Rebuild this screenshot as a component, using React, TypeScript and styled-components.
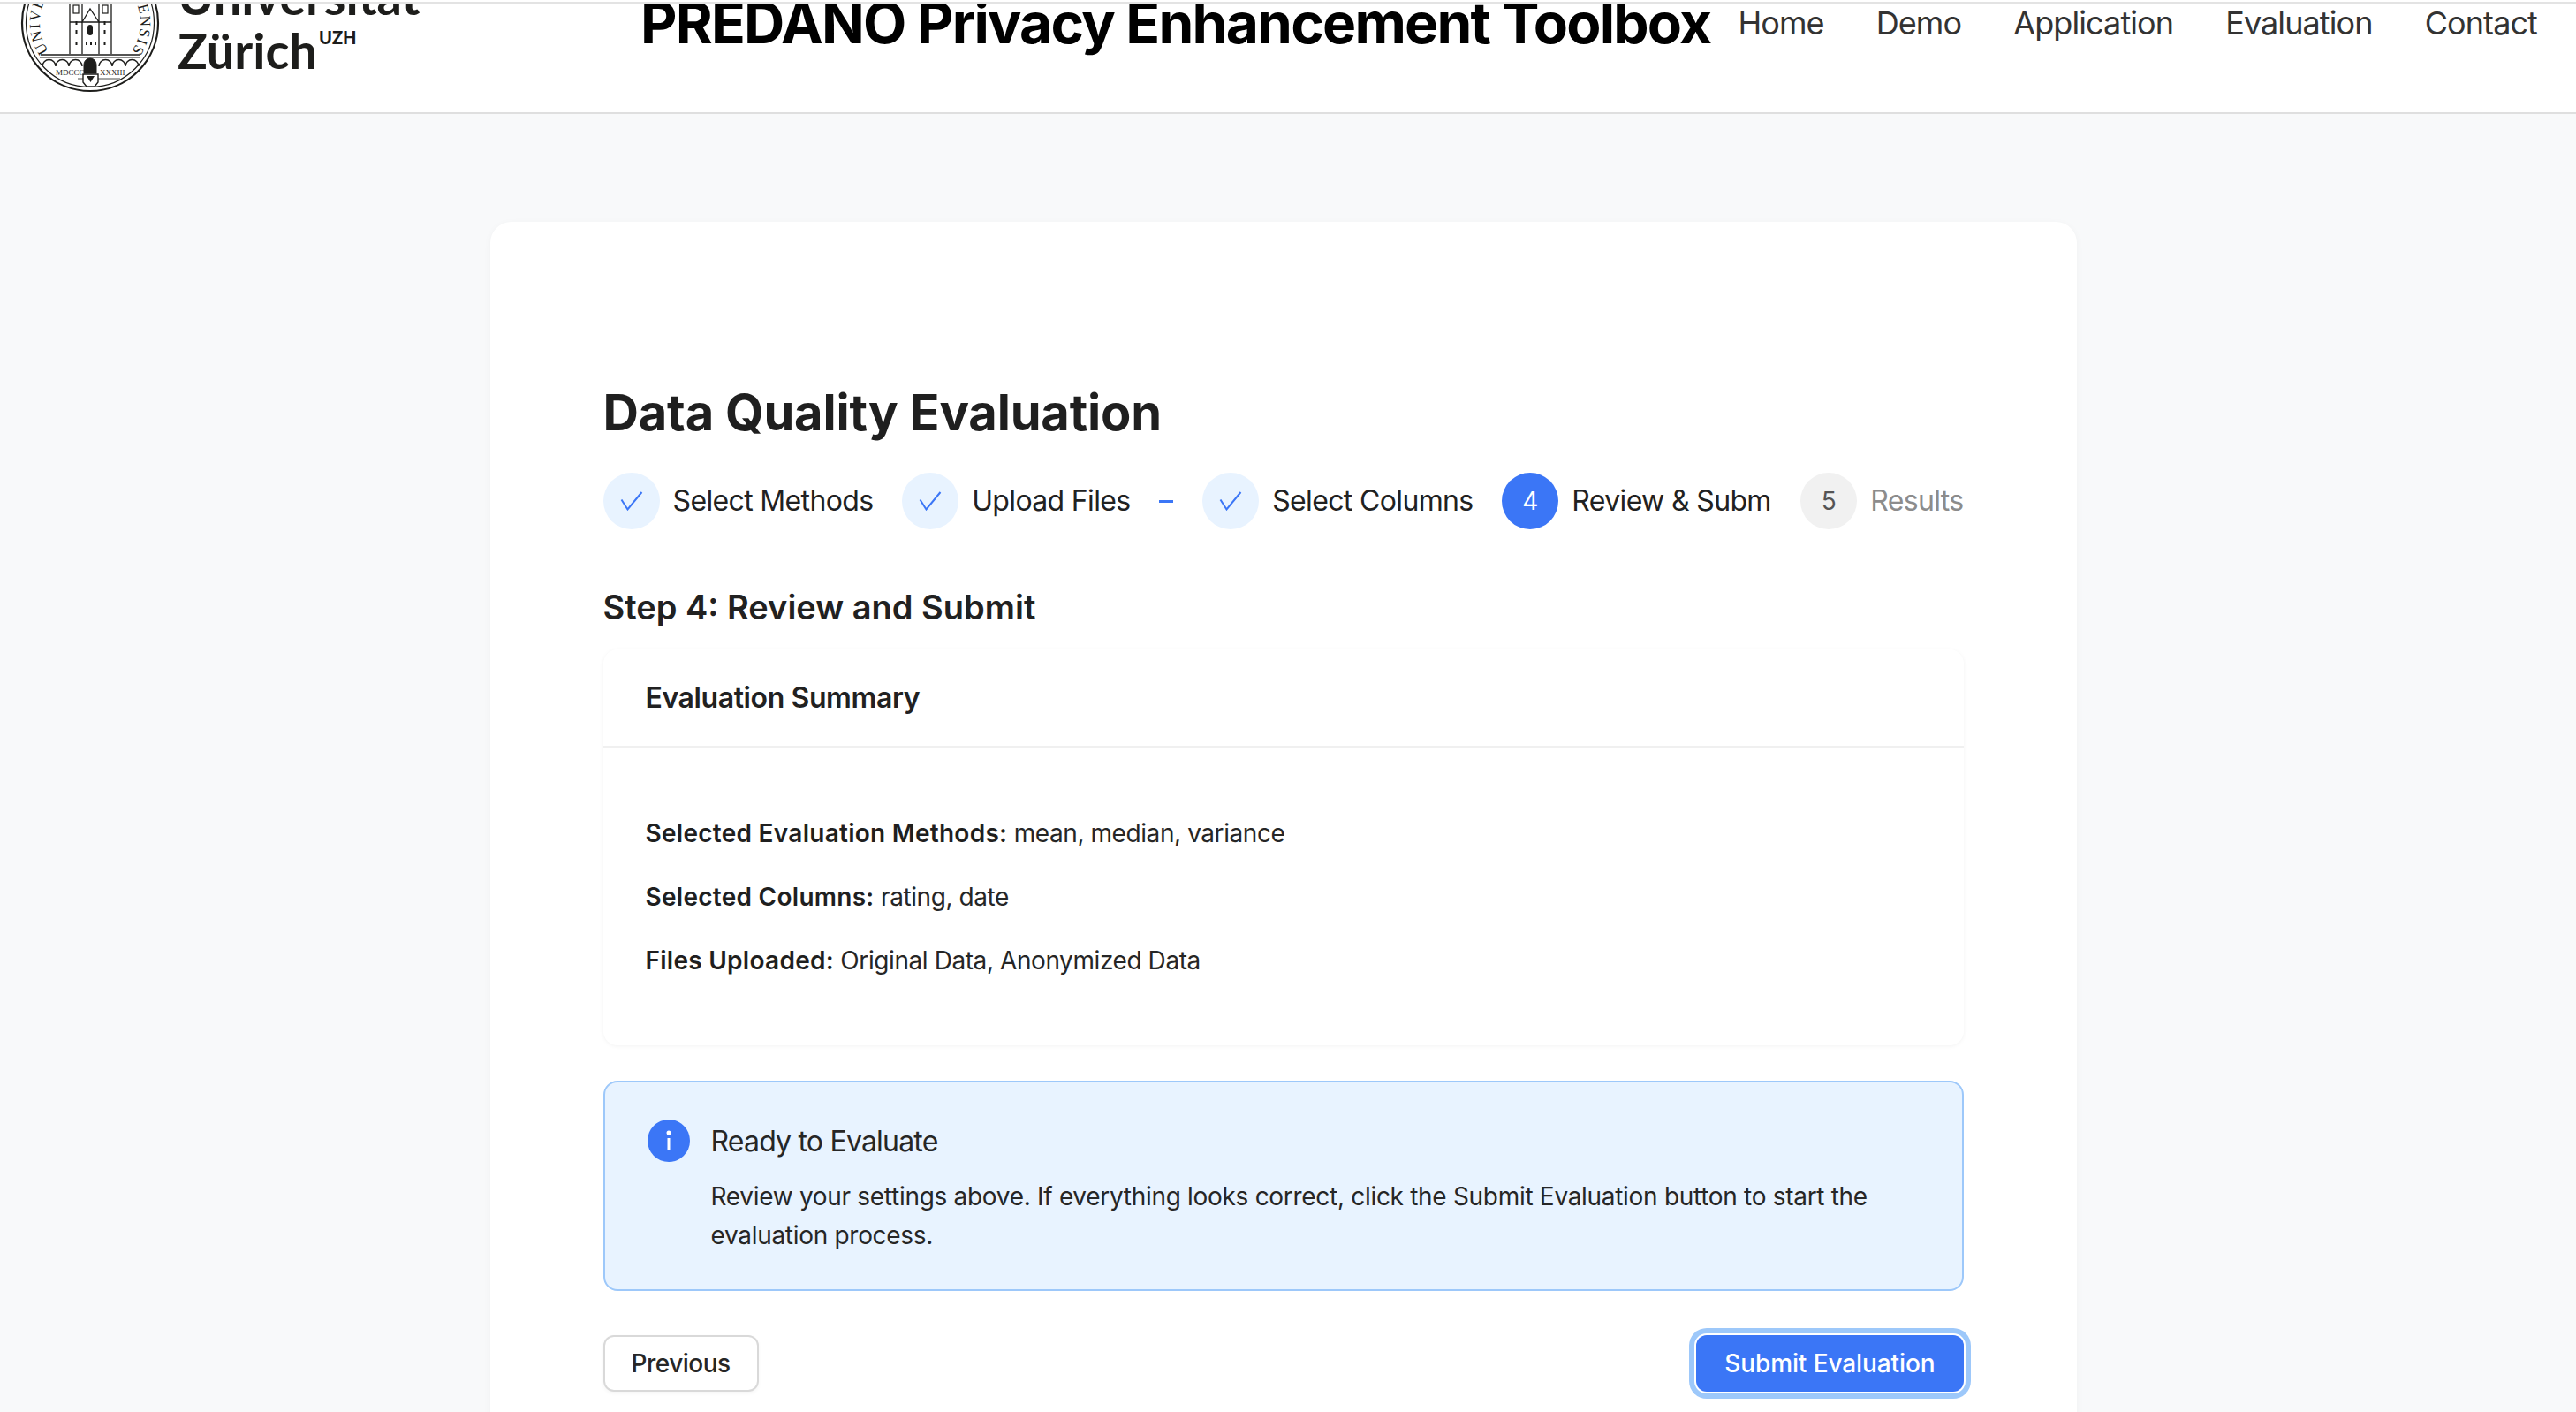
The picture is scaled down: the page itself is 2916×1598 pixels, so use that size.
import React from "react";
import styled, { createGlobalStyle } from "styled-components";

const GlobalStyle = createGlobalStyle`
  html, body {
    margin: 0;
    height: 100%;
    overflow: hidden;
    background: #f8f9fa;
  }
  body {
    font-family: Inter, "Liberation Sans", sans-serif;
    color: #212121;
  }
  * {
    box-sizing: border-box;
  }
`;

const HeaderShell = styled.div`
  padding-top: 2px;
  background: #fff;
`;

const Header = styled.header`
  height: 127px;
  overflow: hidden;
  background: #fff;
  border-top: 2px solid #e3e3e3;
  border-bottom: 2px solid #dfdfdf;
`;

const HeaderRow = styled.div`
  height: 200px;
  margin-top: -78px;
  padding: 0 44px 0 17px;
  display: flex;
  align-items: center;
`;

const Logo = styled.div`
  display: flex;
  align-items: center;
  gap: 14px;
`;

const LogoText = styled.div`
  font-family: Lato, "Liberation Sans", sans-serif;
  font-size: 56px;
  font-weight: 700;
  line-height: 61px;
  color: #1d1d1b;
  white-space: nowrap;
`;

const LogoMark = styled.span`
  font-size: 20px;
  font-weight: 900;
  line-height: 0;
  vertical-align: 28px;
  margin-left: 2px;
`;

const SiteTitle = styled.h1`
  margin: 0 0 0 auto;
  font-size: 64px;
  font-weight: 700;
  line-height: 1;
  letter-spacing: -1.75px;
  color: #000;
  white-space: nowrap;
`;

const Nav = styled.nav`
  margin-left: 31px;
  display: flex;
  gap: 59px;
`;

const NavLink = styled.a`
  font-size: 36px;
  letter-spacing: -0.9px;
  color: #333;
  white-space: nowrap;
  text-decoration: none;
`;

const Main = styled.main`
  padding: 122px 11px 0 0;
`;

const Panel = styled.section`
  width: 1796px;
  margin: 0 auto;
  padding: 182px 128px 128px;
  background: #fff;
  border-radius: 24px;
  box-shadow: 0 2px 8px rgba(0, 0, 0, 0.04);
`;

const PanelTitle = styled.h2`
  margin: 0;
  font-size: 56px;
  font-weight: 700;
  line-height: 68px;
  letter-spacing: -0.18px;
  color: #1f1f1f;
`;

const Steps = styled.div`
  margin-top: 34px;
  display: flex;
  align-items: center;
  justify-content: space-between;
`;

const Step = styled.div`
  display: flex;
  align-items: center;
  gap: 15px;
`;

const StepCircle = styled.div<{ $state: "done" | "active" | "todo" }>`
  width: 64px;
  height: 64px;
  flex: none;
  display: flex;
  align-items: center;
  justify-content: center;
  border-radius: 50%;
  font-size: 28px;
  background: ${(p) =>
    p.$state === "done" ? "#e8f3ff" : p.$state === "active" ? "#3b76f6" : "#f1f1f1"};
  color: ${(p) => (p.$state === "active" ? "#fff" : "#555")};
`;

const StepLabel = styled.div<{ $muted?: boolean; $clip?: boolean }>`
  font-size: 32px;
  line-height: 44px;
  letter-spacing: -0.65px;
  white-space: nowrap;
  color: ${(p) => (p.$muted ? "#8c8c8c" : "#212121")};
  ${(p) => p.$clip && "width: 226px; overflow: hidden;"}
`;

const StepDash = styled.div`
  flex: none;
  width: 16px;
  height: 3px;
  background: #3b76f6;
`;

const StepTitle = styled.h3`
  margin: 60px 0 0;
  font-size: 38px;
  font-weight: 600;
  line-height: 56px;
  color: #212121;
`;

const SummaryCard = styled.div`
  margin-top: 20px;
  border-radius: 16px;
  background: #fff;
  box-shadow: 0 1px 5px rgba(0, 0, 0, 0.05);
`;

const SummaryHeader = styled.div`
  height: 111px;
  padding: 0 48px;
  display: flex;
  align-items: center;
  border-bottom: 2px solid #f0f0f0;
  font-size: 32px;
  font-weight: 600;
  letter-spacing: -0.4px;
  color: #212121;
`;

const SummaryBody = styled.div`
  padding: 76px 48px 75px;
  display: flex;
  flex-direction: column;
  gap: 30px;
`;

const SummaryRow = styled.div`
  font-size: 28px;
  line-height: 42px;
  letter-spacing: -0.42px;
  color: #262626;
`;

const RowKey = styled.strong`
  font-weight: 600;
  letter-spacing: 0.27px;
  color: #1f1f1f;
`;

const Notice = styled.div`
  margin-top: 40px;
  padding: 42px 48px 39px;
  display: flex;
  gap: 24px;
  background: #e8f3ff;
  border: 2px solid #9dc8fa;
  border-radius: 16px;
`;

const NoticeIcon = styled.svg`
  width: 48px;
  height: 48px;
  flex: none;
`;

const NoticeTitle = styled.div`
  font-size: 32px;
  line-height: 50px;
  letter-spacing: -0.8px;
  color: #262626;
`;

const NoticeText = styled.div`
  margin-top: 15px;
  font-size: 28px;
  line-height: 44px;
  letter-spacing: -0.3px;
  color: #262626;
`;

const Actions = styled.div`
  margin-top: 50px;
  display: flex;
  align-items: center;
  justify-content: space-between;
`;

const Button = styled.button<{ $primary?: boolean }>`
  height: 64px;
  padding: ${(p) => (p.$primary ? "0 32px" : "0 30px")};
  font-family: inherit;
  font-size: 28px;
  font-weight: 500;
  letter-spacing: ${(p) => (p.$primary ? "-0.1px" : "-0.5px")};
  border-radius: 12px;
  border: ${(p) => (p.$primary ? "none" : "2px solid #d9d9d9")};
  background: ${(p) => (p.$primary ? "#3b76f6" : "#fff")};
  color: ${(p) => (p.$primary ? "#fff" : "#262626")};
  box-shadow: ${(p) =>
    p.$primary
      ? "0 0 0 2px #fff, 0 0 0 8px #9dc8fa"
      : "0 2px 4px rgba(0, 0, 0, 0.04)"};
`;

const Seal = () => (
  <svg width="170" height="170" viewBox="17 -60 170 170" fill="none" stroke="#1d1d1b">
    <circle cx="102" cy="25" r="77" strokeWidth="2.2" />
    <circle cx="102" cy="25" r="72.5" strokeWidth="1.2" />
    <defs>
      <path id="seal-arc" d="M 55 57 A 57 57 0 1 1 149 57" />
    </defs>
    <text
      fontFamily="Liberation Serif, serif"
      fontSize="17"
      fill="#1d1d1b"
      stroke="none"
    >
      <textPath href="#seal-arc" textLength="247" lengthAdjust="spacing">
        UNIVERSITAS TURICENSIS
      </textPath>
    </text>
    <path d="M79 -6V60M126 -6V60M93 24V60M112 24V60M79 24H93M112 24H126" strokeWidth="1.3" />
    <path d="M93 24L102 9L112 24H93ZM93 24V-6M112 24V-6" strokeWidth="1.3" />
    <rect x="83" y="5" width="6" height="9" strokeWidth="1.2" />
    <rect x="116" y="5" width="6" height="9" strokeWidth="1.2" />
    <g fill="#1d1d1b" stroke="none">
      <rect x="99" y="27" width="6" height="12" rx="3" />
      <rect x="85.5" y="23" width="2" height="4" />
      <rect x="85.5" y="33" width="2" height="4" />
      <rect x="85.5" y="46" width="2" height="4" />
      <rect x="117.5" y="23" width="2" height="4" />
      <rect x="117.5" y="33" width="2" height="4" />
      <rect x="117.5" y="46" width="2" height="4" />
      <rect x="97" y="46" width="2" height="4" />
      <rect x="102" y="46" width="2" height="4" />
      <rect x="107" y="46" width="2" height="4" />
    </g>
    <path d="M46 61H158" strokeWidth="1.6" />
    <path d="M45 64H159" strokeWidth="1.2" />
    <path
      d="M48 74a7.500 7.500 0 0 1 15 0a7.500 7.500 0 0 1 15 0a7.500 7.500 0 0 1 15 0M112 74a7.500 7.500 0 0 1 15 0a7.500 7.500 0 0 1 15 0a7.500 7.500 0 0 1 15 0"
      strokeWidth="1.4"
    />
    <path d="M95 72a7 7 0 0 1 14 0V82H95Z" fill="#1d1d1b" strokeWidth="1" />
    <path d="M94 83H111V92L107 97H98L94 92Z" fill="#fff" strokeWidth="1.4" />
    <path d="M98 85H107L102.500 92Z" fill="#1d1d1b" stroke="none" />
    <path d="M88 88H94M111 88H136" strokeWidth="0.8" />
    <g fontFamily="Liberation Serif, serif" fontSize="9" fill="#1d1d1b" stroke="none">
      <text x="63" y="84">MDCCC</text>
      <text x="113" y="84">XXXIII</text>
    </g>
  </svg>
);

const CheckMark = () => (
  <svg width="26" height="22" viewBox="0 0 26 22" fill="none" stroke="#3b76f6" strokeWidth="2">
    <path d="M1.500 9.500L8.500 20.500L24.500 1" />
  </svg>
);

export default function App() {
  return (
    <>
      <GlobalStyle />
      <HeaderShell>
        <Header>
          <HeaderRow>
            <Logo>
              <Seal />
              <LogoText>
                Universität
                <br />
                Zürich<LogoMark>UZH</LogoMark>
              </LogoText>
            </Logo>
            <SiteTitle>PREDANO Privacy Enhancement Toolbox</SiteTitle>
            <Nav>
              <NavLink>Home</NavLink>
              <NavLink>Demo</NavLink>
              <NavLink>Application</NavLink>
              <NavLink>Evaluation</NavLink>
              <NavLink>Contact</NavLink>
            </Nav>
          </HeaderRow>
        </Header>
      </HeaderShell>
      <Main>
        <Panel>
          <PanelTitle>Data Quality Evaluation</PanelTitle>
          <Steps>
            <Step>
              <StepCircle $state="done"><CheckMark /></StepCircle>
              <StepLabel>Select Methods</StepLabel>
            </Step>
            <Step>
              <StepCircle $state="done"><CheckMark /></StepCircle>
              <StepLabel>Upload Files</StepLabel>
            </Step>
            <StepDash />
            <Step>
              <StepCircle $state="done"><CheckMark /></StepCircle>
              <StepLabel>Select Columns</StepLabel>
            </Step>
            <Step>
              <StepCircle $state="active">4</StepCircle>
              <StepLabel $clip>Review &amp; Submit</StepLabel>
            </Step>
            <Step>
              <StepCircle $state="todo">5</StepCircle>
              <StepLabel $muted>Results</StepLabel>
            </Step>
          </Steps>
          <StepTitle>Step 4: Review and Submit</StepTitle>
          <SummaryCard>
            <SummaryHeader>Evaluation Summary</SummaryHeader>
            <SummaryBody>
              <SummaryRow>
                <RowKey>Selected Evaluation Methods:</RowKey> mean, median, variance
              </SummaryRow>
              <SummaryRow>
                <RowKey>Selected Columns:</RowKey> rating, date
              </SummaryRow>
              <SummaryRow>
                <RowKey>Files Uploaded:</RowKey> Original Data, Anonymized Data
              </SummaryRow>
            </SummaryBody>
          </SummaryCard>
          <Notice>
            <NoticeIcon viewBox="0 0 48 48">
              <circle cx="24" cy="24" r="24" fill="#3b76f6" />
              <circle cx="24" cy="15" r="2.500" fill="#fff" />
              <rect x="22.500" y="21" width="3" height="14" fill="#fff" />
            </NoticeIcon>
            <div>
              <NoticeTitle>Ready to Evaluate</NoticeTitle>
              <NoticeText>
                Review your settings above. If everything looks correct, click the Submit
                Evaluation button to start the evaluation process.
              </NoticeText>
            </div>
          </Notice>
          <Actions>
            <Button>Previous</Button>
            <Button $primary>Submit Evaluation</Button>
          </Actions>
        </Panel>
      </Main>
    </>
  );
}
